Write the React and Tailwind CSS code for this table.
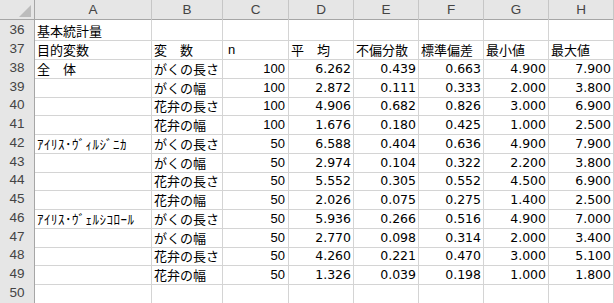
import React from 'react'

const cols = ['A', 'B', 'C', 'D', 'E', 'F', 'G', 'H']

const rows = [
  { n: 36, a: '基本統計量' },
  { n: 37, a: '目的変数', b: '変　数', c: 'n', head: ['平　均', '不偏分散', '標準偏差', '最小値', '最大値'] },
  { n: 38, a: '全　体', b: 'がくの長さ', c: '100', v: ['6.262', '0.439', '0.663', '4.900', '7.900'] },
  { n: 39, b: 'がくの幅', c: '100', v: ['2.872', '0.111', '0.333', '2.000', '3.800'] },
  { n: 40, b: '花弁の長さ', c: '100', v: ['4.906', '0.682', '0.826', '3.000', '6.900'] },
  { n: 41, b: '花弁の幅', c: '100', v: ['1.676', '0.180', '0.425', '1.000', '2.500'] },
  { n: 42, a: 'ｱｲﾘｽ･ｳﾞｨﾙｼﾞﾆｶ', half: true, b: 'がくの長さ', c: '50', v: ['6.588', '0.404', '0.636', '4.900', '7.900'] },
  { n: 43, b: 'がくの幅', c: '50', v: ['2.974', '0.104', '0.322', '2.200', '3.800'] },
  { n: 44, b: '花弁の長さ', c: '50', v: ['5.552', '0.305', '0.552', '4.500', '6.900'] },
  { n: 45, b: '花弁の幅', c: '50', v: ['2.026', '0.075', '0.275', '1.400', '2.500'] },
  { n: 46, a: 'ｱｲﾘｽ･ｳﾞｪﾙｼｺﾛｰﾙ', half: true, b: 'がくの長さ', c: '50', v: ['5.936', '0.266', '0.516', '4.900', '7.000'] },
  { n: 47, b: 'がくの幅', c: '50', v: ['2.770', '0.098', '0.314', '2.000', '3.400'] },
  { n: 48, b: '花弁の長さ', c: '50', v: ['4.260', '0.221', '0.470', '3.000', '5.100'] },
  { n: 49, b: '花弁の幅', c: '50', v: ['1.326', '0.039', '0.198', '1.000', '1.800'] },
  { n: 50 },
]

// 18.75px average row height
const heights = ['h-[19px]', 'h-[19px]', 'h-[19px]', 'h-[18px]']

const grid = 'grid grid-cols-[35px_117px_71px_66px_65px_65px_65px_65px_65px]'
const cell = 'border-r border-b border-[#d4d4d4] flex items-end overflow-visible whitespace-nowrap'
const jp = "font-['Noto_Sans_CJK_JP',sans-serif] text-[13px] leading-[16px]"
const num = "font-['DejaVu_Sans',sans-serif] text-[12.5px] leading-[16px]"

const App = () => {
  return (
    <div className="w-[614px] h-[303px] bg-white text-black overflow-hidden">
      {/* column header */}
      <div className={`${grid} h-[20px] bg-[#e6e6e6] border-b border-[#a6a6a6]`}>
        <div className="border-r border-[#a6a6a6] flex items-end justify-end pr-[3px] pb-[3px]">
          <svg width="12" height="12" viewBox="0 0 12 12">
            <polygon points="12,0 12,12 0,12" fill="#bcbcbc" />
          </svg>
        </div>
        {cols.map((c) => (
          <div key={c} className="border-r border-[#c6c6c6] flex items-center justify-center font-['Liberation_Sans',sans-serif] text-[13.5px] text-[#444]">
            {c}
          </div>
        ))}
      </div>

      {rows.map((r, i) => (
        <div key={r.n} className={`${grid} ${heights[i % 4]}`}>
          <div className="bg-[#e6e6e6] border-r border-b border-r-[#a6a6a6] border-b-[#d0d0d0] flex items-center justify-center font-['Liberation_Sans',sans-serif] text-[13.5px] text-[#444]">
            {r.n}
          </div>
          <div className={`${cell} ${jp} pl-[2px] pb-[1px] ${r.half ? 'tracking-[0.5px]' : ''}`}>{r.a}</div>
          <div className={`${cell} ${jp} pl-[2px] pb-[1px]`}>{r.b}</div>
          <div className={`${cell} pb-[1px] font-['Liberation_Sans',sans-serif] text-[13px] leading-[16px] ${r.head ? 'pl-[5px]' : 'justify-end pr-[3px]'}`}>
            {r.c}
          </div>
          {[0, 1, 2, 3, 4].map((k) =>
            r.head ? (
              <div key={k} className={`${cell} ${jp} pl-[2px] pb-[1px]`}>{r.head[k]}</div>
            ) : (
              <div key={k} className={`${cell} ${num} justify-end pr-[2px] pb-[1px]`}>{r.v ? r.v[k] : ''}</div>
            )
          )}
        </div>
      ))}
    </div>
  )
}

export default App
